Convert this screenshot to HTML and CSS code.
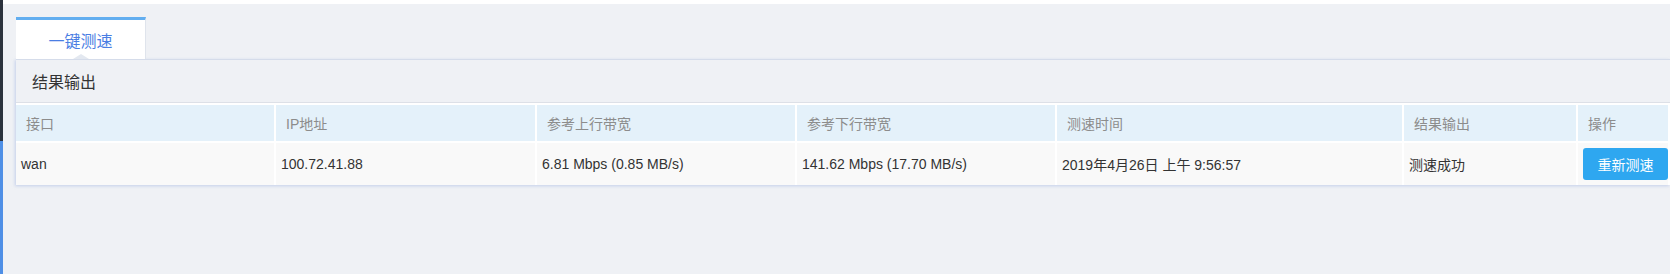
FILE: index.html
```html
<!DOCTYPE html>
<html lang="zh-CN">
<head>
<meta charset="utf-8">
<title>一键测速</title>
<link rel="stylesheet" href="styles.css">
</head>
<body>
<div class="layout">
  <div class="edge">
    <div class="edge-top"></div>
    <div class="edge-bottom"></div>
  </div>
  <div class="main">
    <div class="topbar"></div>
    <div class="content">
      <div class="tabs">
        <div class="tab active">一键测速<span class="notch"></span></div>
      </div>
      <div class="panel">
        <div class="panel-title">结果输出</div>
        <table class="grid">
          <colgroup>
            <col class="c1"><col class="c2"><col class="c3"><col class="c4"><col class="c5"><col class="c6"><col class="c7">
          </colgroup>
          <thead>
            <tr>
              <th>接口</th>
              <th>IP地址</th>
              <th>参考上行带宽</th>
              <th>参考下行带宽</th>
              <th>测速时间</th>
              <th>结果输出</th>
              <th>操作</th>
            </tr>
          </thead>
          <tbody>
            <tr>
              <td>wan</td>
              <td>100.72.41.88</td>
              <td>6.81 Mbps (0.85 MB/s)</td>
              <td>141.62 Mbps (17.70 MB/s)</td>
              <td>2019年4月26日 上午 9:56:57</td>
              <td>测速成功</td>
              <td class="action"><button class="btn">重新测速</button></td>
            </tr>
          </tbody>
        </table>
      </div>
    </div>
  </div>
</div>
</body>
</html>
```
FILE: styles.css
```css
html, body {
  margin: 0;
  padding: 0;
  height: 274px;
  overflow: hidden;
  background: #eff1f5;
  font-family: "Liberation Sans", "Noto Sans CJK SC", sans-serif;
  font-size: 14px;
  color: #333;
}

.layout {
  display: flex;
  height: 274px;
}

.edge {
  width: 3px;
  display: flex;
  flex-direction: column;
  flex: none;
}
.edge-top {
  height: 141px;
  background: #2b323d;
}
.edge-bottom {
  flex: 1;
  background: #4f8fe6;
}

.main {
  flex: 1;
  min-width: 0;
}

.topbar {
  height: 4px;
  background: #ffffff;
}

.content {
  padding: 13px 0 0 13px;
}

.tabs {
  display: flex;
}

.tab {
  position: relative;
  width: 129px;
  height: 39px;
  border-top: 3px solid #62aef0;
  border-right: 1px solid #dfe4ec;
  background: #ffffff;
  color: #4a7ee3;
  font-size: 16px;
  line-height: 40px;
  text-align: center;
  font-family: "Noto Sans CJK SC", sans-serif;
}

.notch {
  position: absolute;
  left: 57px;
  bottom: 0;
  width: 0;
  height: 0;
  border-left: 8px solid transparent;
  border-right: 8px solid transparent;
  border-bottom: 5px solid #e3e8f0;
}

.panel {
  border-top: 1px solid #d5dcea;
  background: #eff1f5;
  box-shadow: -1px 1px 3px rgba(160, 180, 225, 0.55);
}

.panel-title {
  height: 42px;
  line-height: 42px;
  padding-left: 16px;
  font-size: 16px;
  color: #333;
  border-bottom: 1px solid #dde0e7;
  font-family: "Noto Sans CJK SC", sans-serif;
}

.grid {
  width: 100%;
  table-layout: fixed;
  border-collapse: separate;
  border-spacing: 0;
  background: #ffffff;
}

.c1 { width: 260px; }
.c2 { width: 261px; }
.c3 { width: 260px; }
.c4 { width: 260px; }
.c5 { width: 347px; }
.c6 { width: 174px; }
.c7 { width: auto; }

.grid th,
.grid td {
  border-right: 2px solid #ffffff;
  border-top: 2px solid #ffffff;
  text-align: left;
  white-space: nowrap;
  overflow: hidden;
}

.grid th {
  height: 36px;
  padding: 0 0 0 10px;
  background: #e4f1fa;
  color: #8c8c8c;
  font-weight: normal;
  font-size: 14px;
}

.grid td {
  height: 42px;
  padding: 0 0 0 5px;
  background: #f9f9f9;
  color: #333;
}

.grid td.action {
  padding-left: 5px;
}

.btn {
  display: block;
  width: 85px;
  height: 32px;
  border: 0;
  border-radius: 3px;
  background: #2ea7f0;
  color: #ffffff;
  font-family: "Noto Sans CJK SC", sans-serif;
  font-size: 14px;
  padding: 0;
  cursor: pointer;
}
```
